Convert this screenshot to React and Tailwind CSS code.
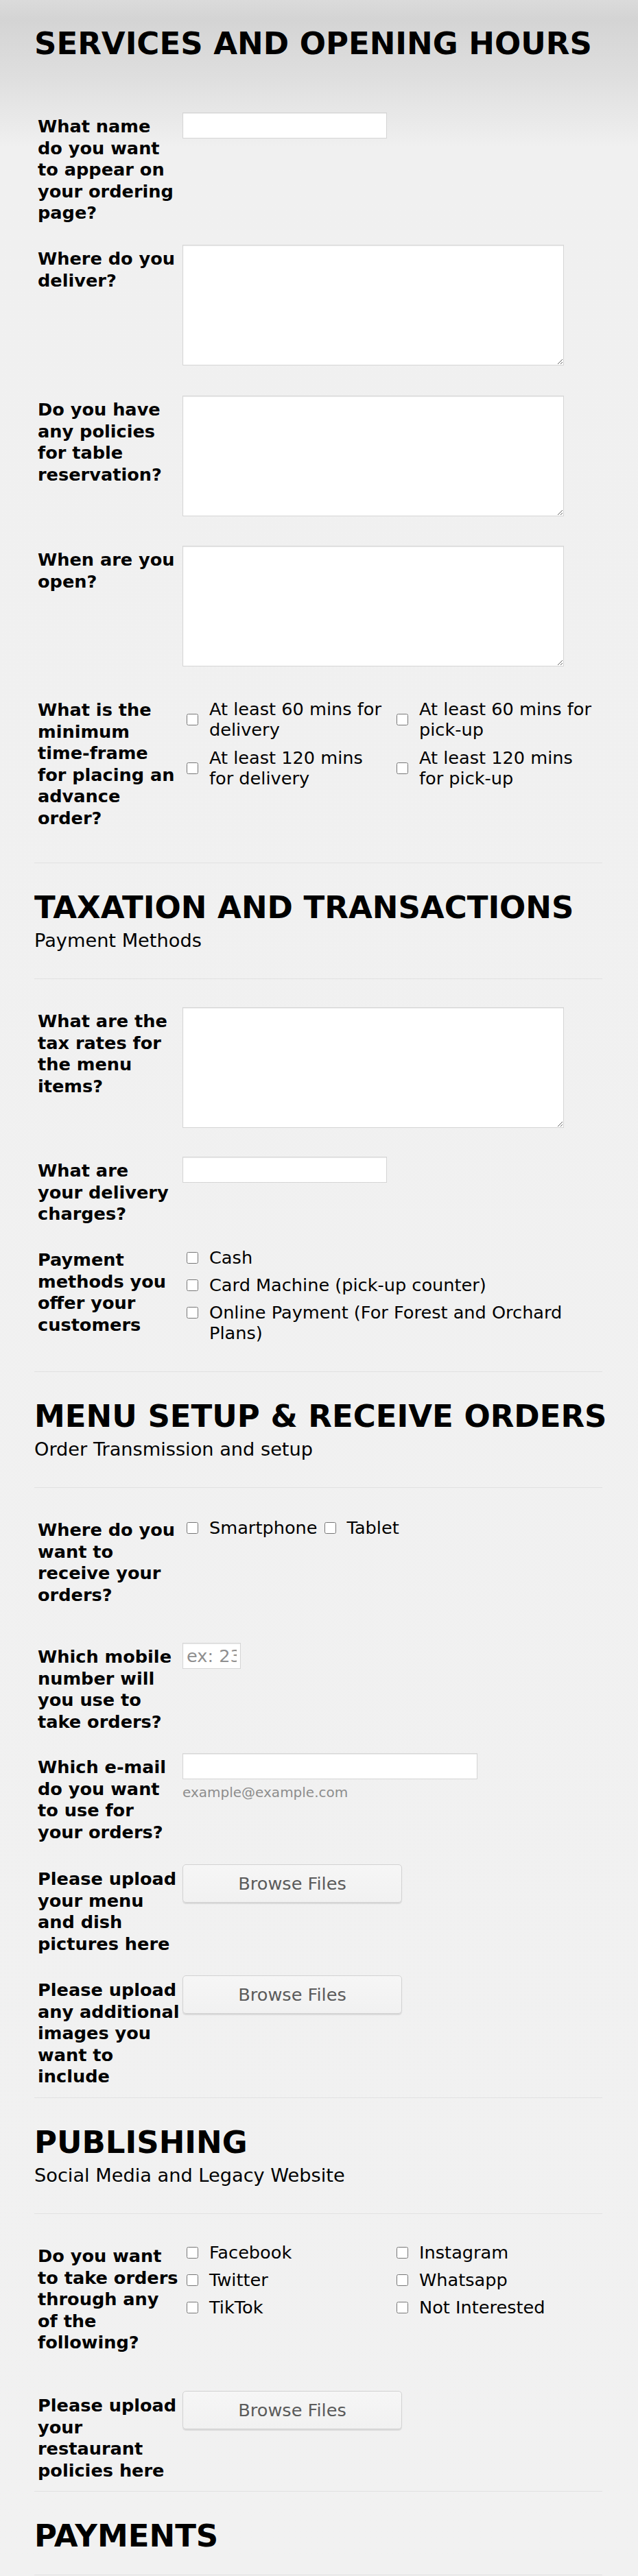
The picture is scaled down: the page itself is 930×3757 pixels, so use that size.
import React from "react";

const Lines = ({ lines }) =>
  lines.map((l, i) => (
    <React.Fragment key={i}>
      {l}
      {i < lines.length - 1 && <br />}
    </React.Fragment>
  ));

const Label = ({ lines, mt = "mt-[5px]" }) => (
  <div className={`w-[211px] shrink-0 ${mt} font-bold text-[25.6px] leading-[31.5px] whitespace-nowrap text-black`}>
    <Lines lines={lines} />
  </div>
);

const Check = ({ className = "" }) => (
  <input type="checkbox" className={`w-[17px] h-[17px] m-0 shrink-0 ${className}`} />
);

const Divider = ({ className = "" }) => <div className={`h-px bg-[#e1e1e1] ${className}`} />;

const SectionHead = ({ title, subtitle }) => (
  <>
    <h2 className="mt-[38px] text-[45px] leading-[54px] font-bold text-black whitespace-nowrap">{title}</h2>
    <div className="mt-[5px] text-[27.2px] leading-[32px] text-black whitespace-nowrap">{subtitle}</div>
    <Divider className="mt-[39px]" />
  </>
);

const TextArea = () => (
  <textarea className="block w-[556px] h-[176px] bg-white border border-[#d5d5d5] shadow-[inset_0_1px_1px_#ececec]" />
);

const TextInput = ({ w, placeholder }) => (
  <input
    type="text"
    placeholder={placeholder}
    className={`block ${w} h-[38px] bg-white border border-[#d5d5d5] px-[5px] text-[25.6px] text-black placeholder:text-[#8f8f8f] shadow-[inset_0_1px_1px_#ececec]`}
  />
);

const Browse = () => (
  <button className="block w-[320px] h-[56px] rounded-[5px] border border-[#d2d2d2] bg-[linear-gradient(to_bottom,#f6f6f6,#f1f1f1)] text-[#5b5b5b] text-[25.6px] shadow-[0_2px_1px_#d9d9d9]">
    Browse Files
  </button>
);

const Opt = ({ lines, align = "items-center" }) => (
  <div className={`flex ${align}`}>
    <Check className={align === "items-start" ? "mt-[6.5px]" : ""} />
    <div className="ml-[16px] text-[25.6px] leading-[30px] whitespace-nowrap text-black">
      <Lines lines={lines} />
    </div>
  </div>
);

const Row = ({ h, mt = "", children }) => (
  <div className={`flex items-start ${h} ${mt} pl-[5px]`}>{children}</div>
);

export default function App() {
  return (
    <div className="min-h-[3757px] bg-[linear-gradient(to_bottom,#dbdbdb_0px,#d4d4d4_28px,#dedede_110px,#f0f0f0_215px,#f1f1f1_100%)] font-['DejaVu_Sans','Verdana',sans-serif]">
      <div className="ml-[50px] w-[828px] pt-[37px]">
        {/* SECTION 1 */}
        <h1 className="text-[45px] leading-[54px] font-bold text-black whitespace-nowrap">SERVICES AND OPENING HOURS</h1>

        <Row h="h-[193px]" mt="mt-[73px]">
          <Label lines={["What name", "do you want", "to appear on", "your ordering", "page?"]} />
          <div><TextInput w="w-[298px]" /></div>
        </Row>
        <Row h="h-[220px]">
          <Label lines={["Where do you", "deliver?"]} />
          <div><TextArea /></div>
        </Row>
        <Row h="h-[219px]">
          <Label lines={["Do you have", "any policies", "for table", "reservation?"]} />
          <div><TextArea /></div>
        </Row>
        <Row h="h-[219px]">
          <Label lines={["When are you", "open?"]} />
          <div><TextArea /></div>
        </Row>
        <Row h="h-[243px]">
          <Label lines={["What is the", "minimum", "time-frame", "for placing an", "advance", "order?"]} />
          <div className="mt-[4px] pl-[6px] grid grid-cols-[306px_306px] gap-y-[11px] content-start">
            <Opt lines={["At least 60 mins for", "delivery"]} />
            <Opt lines={["At least 60 mins for", "pick-up"]} />
            <Opt lines={["At least 120 mins", "for delivery"]} />
            <Opt lines={["At least 120 mins", "for pick-up"]} />
          </div>
        </Row>
        <Divider />

        {/* SECTION 2 */}
        <SectionHead title="TAXATION AND TRANSACTIONS" subtitle="Payment Methods" />
        <Row h="h-[218px]" mt="mt-[41px]">
          <Label lines={["What are the", "tax rates for", "the menu", "items?"]} />
          <div><TextArea /></div>
        </Row>
        <Row h="h-[130px]">
          <Label lines={["What are", "your delivery", "charges?"]} />
          <div><TextInput w="w-[298px]" /></div>
        </Row>
        <Row h="h-[183px]">
          <Label lines={["Payment", "methods you", "offer your", "customers"]} />
          <div className="mt-[2px] pl-[6px] flex flex-col gap-y-[10px]">
            <Opt align="items-start" lines={["Cash"]} />
            <Opt align="items-start" lines={["Card Machine (pick-up counter)"]} />
            <Opt align="items-start" lines={["Online Payment (For Forest and Orchard", "Plans)"]} />
          </div>
        </Row>
        <Divider />

        {/* SECTION 3 */}
        <SectionHead title="MENU SETUP & RECEIVE ORDERS" subtitle="Order Transmission and setup" />
        <Row h="h-[185px]" mt="mt-[41px]">
          <Label lines={["Where do you", "want to", "receive your", "orders?"]} />
          <div className="mt-[2px] pl-[6px] flex items-center h-[30px]">
            <Check />
            <span className="ml-[16px] text-[25.6px] leading-[30px] text-black whitespace-nowrap">Smartphone</span>
            <Check className="ml-[10px]" />
            <span className="ml-[16px] text-[25.6px] leading-[30px] text-black whitespace-nowrap">Tablet</span>
          </div>
        </Row>
        <Row h="h-[161px]">
          <Label lines={["Which mobile", "number will", "you use to", "take orders?"]} />
          <div><TextInput w="w-[85px]" placeholder="ex: 23456789" /></div>
        </Row>
        <Row h="h-[162px]">
          <Label lines={["Which e-mail", "do you want", "to use for", "your orders?"]} />
          <div>
            <TextInput w="w-[430px]" />
            <div className="mt-[7px] text-[20px] leading-[24px] text-[#8d8d8d]">example@example.com</div>
          </div>
        </Row>
        <Row h="h-[162px]">
          <Label mt="mt-[6px]" lines={["Please upload", "your menu", "and dish", "pictures here"]} />
          <div><Browse /></div>
        </Row>
        <Row h="h-[178px]">
          <Label mt="mt-[6px]" lines={["Please upload", "any additional", "images you", "want to", "include"]} />
          <div><Browse /></div>
        </Row>
        <Divider />

        {/* SECTION 4 */}
        <SectionHead title="PUBLISHING" subtitle="Social Media and Legacy Website" />
        <Row h="h-[217px]" mt="mt-[41px]">
          <Label lines={["Do you want", "to take orders", "through any", "of the", "following?"]} />
          <div className="pl-[6px] grid grid-cols-[306px_306px] gap-y-[10px] content-start">
            <Opt lines={["Facebook"]} />
            <Opt lines={["Instagram"]} />
            <Opt lines={["Twitter"]} />
            <Opt lines={["Whatsapp"]} />
            <Opt lines={["TikTok"]} />
            <Opt lines={["Not Interested"]} />
          </div>
        </Row>
        <Row h="h-[146px]">
          <Label mt="mt-[6px]" lines={["Please upload", "your", "restaurant", "policies here"]} />
          <div><Browse /></div>
        </Row>
        <Divider />

        {/* SECTION 5 */}
        <h2 className="mt-[38px] text-[45px] leading-[54px] font-bold text-black whitespace-nowrap">PAYMENTS</h2>
        <Divider className="mt-[29px]" />
      </div>
    </div>
  );
}
